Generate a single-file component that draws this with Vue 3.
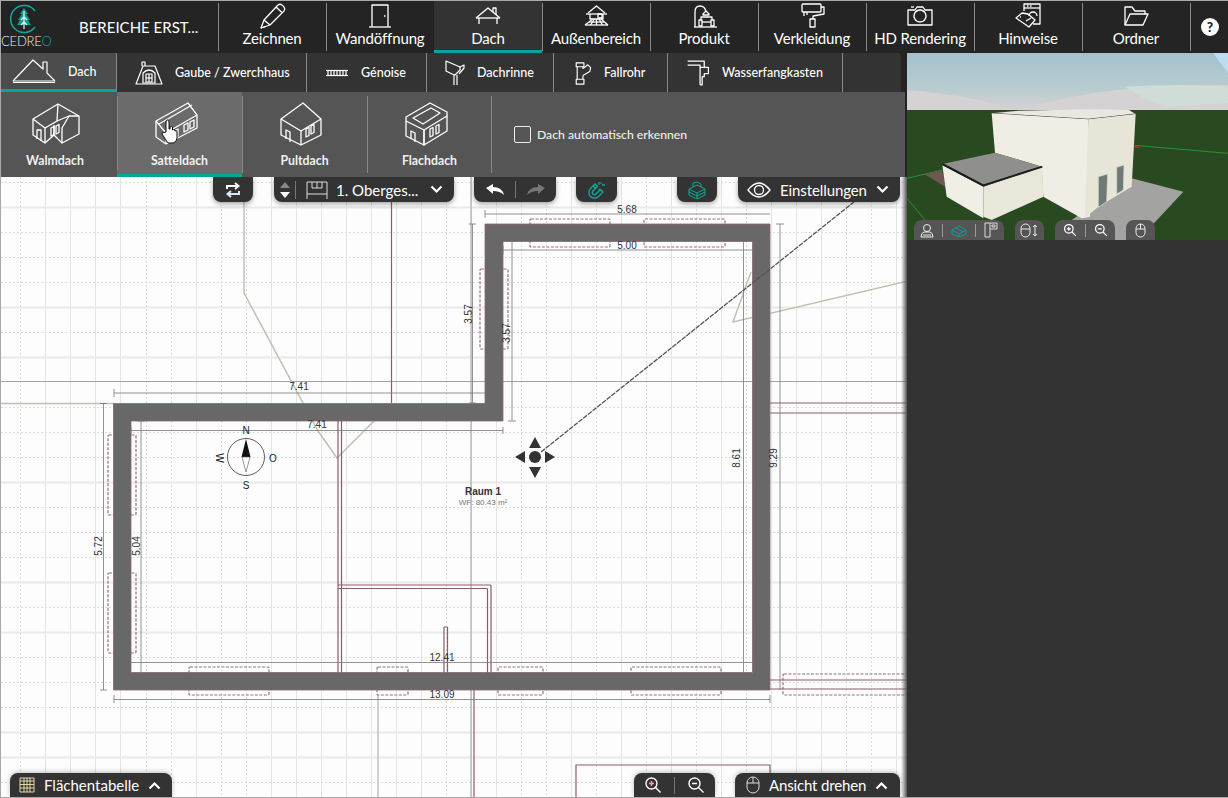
<script setup>
const navItems = [
  { label: 'Zeichnen', icon: ['M4 27l3-8L21 4q2-1.500 4 0l2 2q1.500 2 0 4L13 24z', 'M7 19l6 5', 'M19 6l6 5.500', 'M4 27l5-1.500'] },
  { label: 'Wandöffnung', icon: ['M7 26V4h16v22', 'M4 26h22', 'M19 15h1.500'] },
  { label: 'Dach', active: true, icon: ['M3 17L15 7l12 10', 'M20 11V7h3v7', 'M3 17h24', 'M6 17v6', 'M24 17v6'] },
  { label: 'Außenbereich', icon: ['M7 12l8.500-7 8.500 7', 'M5 13h21', 'M9 13v5h13v-5', 'M17 13h4v4h-4z', 'M4 24l8-6', 'M9.500 24l4-6', 'M15.500 24v-6', 'M21.500 24L18 18', 'M27 24l-7-6', 'M4 24h23', 'M8 21h15'] },
  { label: 'Produkt', icon: ['M6 26V11q0-6 5-6t6 6', 'M14 13l3-3 3 3v1h-6z', 'M12 19v-3h11v3', 'M10 19h3v6h-3z', 'M22 19h3v6h-3z', 'M13 21h9', 'M5 26h23'] },
  { label: 'Verkleidung', icon: ['M6 3h17q1 0 1 1v6q0 1-1 1H6q-1 0-1-1V4q0-1 1-1z', 'M24 6h3v7l-11 2v3', 'M13 18h5v8h-5z', 'M7 11v4', 'M10 11v3'] },
  { label: 'HD Rendering', icon: ['M3 9h7l2-3h6l2 3h7v15H3z', 'M15 9a6 6 0 1 0 .01 0z', 'M6 6h3'] },
  { label: 'Hinweise', icon: ['M11 10V3h16v20h-7', 'M11 7h16', 'M14 5h1.500', 'M17 5h1.500', 'M3 17l6-5 6 1 7 6-6 7z', 'M7 16h1', 'M16 15a4 4 0 0 1 8 0', 'M13 20l5-3'] },
  { label: 'Ordner', icon: ['M4 24V6h7l3 4h10v3', 'M4 24l5-11h18l-5 11z'] }
]

const subTabs = [
  { label: 'Dach', width: 116, iconWidth: 44, iconBox: '0 0 44 24', active: true, icon: ['M1 22h42', 'M1 23.500h42', 'M1 22L21 1l10 9V3h4v11l8 8'] },
  { label: 'Gaube / Zwerchhaus', width: 190, iconWidth: 28, iconBox: '0 0 28 26', icon: ['M1 24L8 6h12l7 18z', 'M7 6V2h3v4', 'M8 23V13q6-6 12 0v10z', 'M11 14h6v8h-6z', 'M14 14v8', 'M11 18h6'] },
  { label: 'Génoise', width: 120, iconWidth: 24, iconBox: '0 0 24 8', icon: ['M1 1.500h22', 'M1 6.500h22', 'M3 1.500v5', 'M6 1.500v5', 'M9 1.500v5', 'M12 1.500v5', 'M15 1.500v5', 'M18 1.500v5', 'M21 1.500v5'] },
  { label: 'Dachrinne', width: 127, iconWidth: 20, iconBox: '0 0 20 26', icon: ['M1 1l14 6v3l-5 5-3-1-6-3z', 'M15 7l4-2v3l-5 6', 'M9 15v10', 'M12 15v10'] },
  { label: 'Fallrohr', width: 114, iconWidth: 20, iconBox: '0 0 20 27', icon: ['M4 3h8v4H4z', 'M5 7v13', 'M11 7v2', 'M11 16v4', 'M4 20h8v5H4z', 'M11 9l5-4 3 3-1 4-7 4'] },
  { label: 'Wasserfangkasten', width: 175, iconWidth: 24, iconBox: '0 0 22 25', icon: ['M1 1h16v6', 'M1 5h12v19', 'M13 7h8v6h-4', 'M17 13v3h-2v8h-2'] }
]

const roofTypes = [
  { label: 'Walmdach', icon: ['M4 18L29 3l21 12v18L33 42l-8-8-9 8L4 34z', 'M29 3l-1 17-12 7', 'M4 18l12 9v15', 'M28 20l12-5 10 0', 'M33 42V27l7-12', 'M25 34V24', 'M8 38V29h4v11', 'M22 27v8l3-1.500v-8z', 'M27 25v8l3-1.500v-8z'] },
  { label: 'Satteldach', active: true, icon: ['M2 20L34 2l9 12v13L12 43 2 36z', 'M2 20l10 12v11', 'M12 32L43 14', 'M5 23L38 4', 'M20 30v7l4-2v-7z', 'M30 24v7l4-2v-7z', 'M36 21v7l4-2v-7z'] },
  { label: 'Pultdach', icon: ['M2 18L24 2l18 16v16L22 44 2 34z', 'M2 18l20 12v14', 'M22 30l20-12', 'M7 38v-9l4 2v10', 'M27 28v8l3-1.500v-8z', 'M32 25v8l3-1.500v-8z'] },
  { label: 'Flachdach', icon: ['M2 16L26 2l17 9v4L20 29 2 20z', 'M2 20v15l18 9V29', 'M20 29v15l23-14V15', 'M9 17L27 7l9 5-17 11z', 'M7 38v-8l4 2v9', 'M26 28v8l3-1.500v-8z', 'M32 25v8l3-1.500v-8z'] }
]

const dottedX = [19, 145, 170, 220, 245, 445, 520, 545, 595, 645, 695, 745, 845, 870]
const solidX = [44, 69, 94, 119, 195, 270, 295, 320, 345, 370, 395, 420, 470, 495, 570, 620, 670, 720, 770, 795, 820, 895]
const dottedY = [182, 232, 257, 282, 332, 407, 432, 457, 507, 532, 557, 607, 657, 682, 707, 782]
const solidY = [207, 307, 357, 482, 582, 632, 732, 757]

const windows = [
  [529, 219, 80, 28], [643, 219, 81, 28],
  [479, 269, 28, 80], [107, 435, 28, 80], [107, 573, 28, 80],
  [188, 667, 80, 28], [376, 667, 31, 28], [497, 667, 45, 28], [630, 667, 90, 28],
  [782, 674, 130, 21]
]

const dimensions = [
  'M113 393H484M113 389v8', 'M130 430.500H502M130 427v7M502 427v7',
  'M484 214H769M484 210v8', 'M502 250H752M502 246v8M752 246v8',
  'M471.500 224V403M468 224h7M468 403h7', 'M511 241.500V421M507 241.500h8M507 421h8',
  'M742.500 241.500V673M739 241.500h7', 'M779 224V690M775 224h8',
  'M102.500 403.500V690M99 403.500h7M99 690h7', 'M140 421V673M136 421h8M136 673h8',
  'M130 662.500H752M752 659v7', 'M113 699.500H769M113 695v8M769 695v8'
]

const dimLabels = [
  { t: '7.41', x: 298, y: 390 }, { t: '7.41', x: 316, y: 428 },
  { t: '5.68', x: 626, y: 213 }, { t: '5.00', x: 626, y: 249 },
  { t: '12.41', x: 441, y: 661 }, { t: '13.09', x: 441, y: 698 }
]

const rotatedLabels = [
  { t: '3.57', x: 471, y: 314 }, { t: '3.57', x: 509, y: 333 },
  { t: '8.61', x: 739, y: 458 }, { t: '9.29', x: 776, y: 458 },
  { t: '5.72', x: 101, y: 546 }, { t: '5.04', x: 139, y: 546 }
]
</script>

<template>
  <div class="app">
    <header class="topbar">
      <div class="logo">
        <svg width="30" height="30" viewBox="0 0 30 30" fill="none">
          <path d="M26 7a13.500 13.500 0 1 0 0 16" stroke="#12a89d" stroke-width="1.600" />
          <path d="M15 4l4 6h-2l4 6h-2l3 5h-7 -7l3-5H9l4-6h-2z" fill="#0f9e92" />
          <path d="M15 7v18M15 13l-3 3M15 13l3 3M15 18l-3 3M15 18l3 3" stroke="#e8f2f0" stroke-width="1.200" />
        </svg>
        <div class="logo-text">CEDRE<span class="logo-o">O</span></div>
      </div>
      <div class="project">BEREICHE ERST...</div>
      <nav class="nav">
        <div v-for="item in navItems" :key="item.label" class="nav-item" :class="{ active: item.active }">
          <svg class="nav-icon" width="30" height="28" viewBox="0 0 30 28" fill="none" stroke="#fff" stroke-width="1.300" stroke-linejoin="round">
            <path v-for="d in item.icon" :key="d" :d="d" />
          </svg>
          <span>{{ item.label }}</span>
        </div>
      </nav>
      <div class="help-cell"><div class="help">?</div></div>
    </header>

    <div class="body">
      <div class="left">
        <div class="subbar">
          <div v-for="tab in subTabs" :key="tab.label" class="sub-tab" :class="{ active: tab.active }" :style="{ width: tab.width + 'px' }">
            <div class="sub-icon">
              <svg :width="tab.iconWidth" height="26" :viewBox="tab.iconBox" fill="none" stroke="#fff" stroke-width="1.200" stroke-linejoin="round">
                <path v-for="d in tab.icon" :key="d" :d="d" />
              </svg>
            </div>
            <span>{{ tab.label }}</span>
          </div>
        </div>

        <div class="roofbar">
          <div v-for="roof in roofTypes" :key="roof.label" class="roof-item" :class="{ active: roof.active }">
            <svg width="52" height="46" viewBox="0 0 52 46" fill="none" stroke="#fff" stroke-width="1.300" stroke-linejoin="round">
              <path v-for="d in roof.icon" :key="d" :d="d" />
            </svg>
            <span>{{ roof.label }}</span>
            <svg v-if="roof.active" class="hand" width="18" height="25" viewBox="0 0 18 25">
              <path d="M5 13V3q0-2 1.500-2T8 3v7l1 0V8q1.500-1 2.500 0v3q1.500-1 2.500 0v1q1.500-.5 2 .5V19q-1 5-5 5H8q-2 0-3-3l-4-6q0-2 2-1.500z" fill="#fff" stroke="#111" stroke-width="1" />
            </svg>
          </div>
          <label class="auto-detect">
            <span class="checkbox"></span>
            Dach automatisch erkennen
          </label>
        </div>

        <div class="canvas">
          <svg class="plan" viewBox="0 177 906 620" fill="none">
            <line v-for="x in dottedX" :key="'dx' + x" :x1="x + 0.5" :x2="x + 0.5" y1="177" y2="798" class="grid-dot" />
            <line v-for="y in dottedY" :key="'dy' + y" x1="0" x2="907" :y1="y + 0.5" :y2="y + 0.5" class="grid-dot" />
            <line v-for="x in solidX" :key="'sx' + x" :x1="x + 0.5" :x2="x + 0.5" y1="177" y2="798" class="grid-solid" />
            <line v-for="y in solidY" :key="'sy' + y" x1="0" x2="907" :y1="y + 0.5" :y2="y + 0.5" class="grid-thick" />

            <path class="guide" d="M0 381.500H907M470 177V798" />
            <path class="roofline" d="M243 177V293L317 431 336 458 373 421M750 272L732 322 907 281M0 403.500H113M377 695V798" />
            <path class="inner" d="M390.500 177V403M337 421V673M340.500 421V673M337 585H490M337 588.500H486.500M486.500 588.500V673M490 585V673M443 627V673M446.500 627V673M443 627h3.500M473 690V798M769 403H907M769 413H907M769 680H907M769 689H907M575 798V765H769V798" />
            <rect v-for="w in windows" :key="w.join()" class="window" :x="w[0]" :y="w[1]" :width="w[2]" :height="w[3]" rx="1" />
            <path class="wall" fill-rule="evenodd" d="M112.500 403.500H484V224H769V690H112.500ZM130 421V672.500H751.500V241.500H502V421Z" />

            <path v-for="d in dimensions" :key="d" class="dim" :d="d" />
            <text v-for="l in dimLabels" :key="l.t + l.x" class="dim-label" :x="l.x" :y="l.y">{{ l.t }}</text>
            <text v-for="l in rotatedLabels" :key="l.t + l.x" class="dim-label" :transform="`translate(${l.x} ${l.y}) rotate(-90)`">{{ l.t }}</text>

            <path class="sight" d="M540 452L853 202" />
            <g fill="#333">
              <circle cx="534" cy="457" r="6" />
              <path d="M534 437l6 11h-12zM534 478l6-11h-12zM514 457l10-6v12zM554 457l-10-6v12z" />
            </g>

            <g class="compass">
              <circle cx="245" cy="457" r="18.500" stroke="#333" stroke-width="0.800" />
              <path d="M245 439l-4.500 18h9z" fill="#111" stroke="none" />
              <path d="M241 457l4 15 4-15z" fill="#fff" stroke="#555" stroke-width="0.600" />
              <text x="245" y="434" class="compass-label">N</text>
              <text x="245" y="489" class="compass-label">S</text>
              <text x="272" y="461.500" class="compass-label">O</text>
              <text class="compass-label" transform="translate(214.500 458) rotate(90)">W</text>
            </g>

            <text x="482" y="495" class="room-name">Raum 1</text>
            <text x="482" y="505" class="room-area">WF: 80.43 m²</text>
          </svg>
          <div class="edge-shadow"></div>

          <div class="tools-top">
            <div class="tool tool-swap">
              <svg width="18" height="18" viewBox="0 0 18 18" fill="none" stroke="#fff" stroke-width="2">
                <path d="M3 8V5h11M11 2l3.500 3L11 8" />
                <path d="M15 10v3H4M7 10l-3.500 3L7 16" stroke="#d5e8f5" />
              </svg>
            </div>
            <div class="tool tool-floor">
              <svg width="10" height="18" viewBox="0 0 10 18">
                <path d="M5 1l5 6H0z" fill="#888" />
                <path d="M5 17l5-6H0z" fill="#fff" />
              </svg>
              <span class="tool-sep"></span>
              <svg class="plan-icon" width="22" height="20" viewBox="0 0 22 20" fill="none" stroke="#ddd" stroke-width="1">
                <path d="M1 2h20v12H1zM1 14v5M21 14v5" />
                <path d="M6 2v6h10V2M11 2v6" />
              </svg>
              <span class="floor-name">1. Oberges...</span>
              <svg class="chevron" width="13" height="9" viewBox="0 0 13 9" fill="none" stroke="#fff" stroke-width="2.200"><path d="M1.500 1.500l5 5 5-5" /></svg>
            </div>
            <div class="tool tool-undo">
              <svg width="18" height="12" viewBox="0 0 18 12" fill="#fff"><path d="M0 4l7-4v3q9 0 11 8-4-4-11-4v3z" /></svg>
              <span class="tool-sep tall"></span>
              <svg width="18" height="12" viewBox="0 0 18 12" fill="#777"><path d="M18 4l-7-4v3q-9 0-11 8 4-4 11-4v3z" /></svg>
            </div>
            <div class="tool tool-magnet">
              <svg width="18" height="18" viewBox="0 0 18 18" fill="none" stroke="#12a89d" stroke-width="1.300">
                <path d="M7 3L2.500 7.500a5.500 5.500 0 0 0 8 8L15 11l-2.500-2.500-4.500 4.500a2 2 0 0 1-3-3l4.500-4.500zM5 5l2.500 2.500M13 9l-2.500-1M11 1v3M14 4h3M13.500 1.500l-1 1" />
              </svg>
            </div>
            <div class="tool tool-cube">
              <svg width="18" height="18" viewBox="0 0 18 18" fill="none" stroke="#12a89d" stroke-width="1">
                <path d="M1 8l8-4 8 4v6l-8 4-8-4zM1 8l8 4 8-4M9 12v6M1 11l8 4 8-4M5 6V2l4-1 4 2v3" />
              </svg>
            </div>
            <div class="tool tool-settings">
              <svg width="24" height="16" viewBox="0 0 24 16" fill="none" stroke="#fff" stroke-width="1.300">
                <path d="M1 8q11-14 22 0-11 14-22 0z" /><circle cx="12" cy="8" r="4.500" />
              </svg>
              <span class="settings-label">Einstellungen</span>
              <svg width="13" height="9" viewBox="0 0 13 9" fill="none" stroke="#fff" stroke-width="2.200"><path d="M1.500 1.500l5 5 5-5" /></svg>
            </div>
          </div>

          <div class="tools-bottom">
            <div class="tool-up table-btn">
              <svg width="16" height="16" viewBox="0 0 16 16" fill="none" stroke="#e6d9a8" stroke-width="1">
                <path d="M1 1h14v14H1zM1 4h14M5 1v14M8 1v14M11 1v14M1 7.500h14M1 11h14" />
              </svg>
              <span>Flächentabelle</span>
              <svg width="13" height="9" viewBox="0 0 13 9" fill="none" stroke="#fff" stroke-width="2.200"><path d="M1.500 7.500l5-5 5 5" /></svg>
            </div>
            <div class="bottom-right">
              <div class="tool-up zoom-btn">
                <svg width="18" height="18" viewBox="0 0 18 18" fill="none" stroke="#fff" stroke-width="1.400">
                  <circle cx="7.500" cy="7.500" r="5.500" /><path d="M11.500 11.500l5 5" />
                  <path d="M5 7.500h5M7.500 5v5" stroke="#f1a0a0" />
                </svg>
                <span class="tool-sep tall"></span>
                <svg width="18" height="18" viewBox="0 0 18 18" fill="none" stroke="#fff" stroke-width="1.400">
                  <circle cx="7.500" cy="7.500" r="5.500" /><path d="M11.500 11.500l5 5M5 7.500h5" />
                </svg>
              </div>
              <div class="tool-up rotate-btn">
                <svg width="14" height="18" viewBox="0 0 14 18" fill="none" stroke="#ddd" stroke-width="1">
                  <rect x="1" y="1" width="12" height="16" rx="6" /><path d="M1 7h12M7 1v6" />
                </svg>
                <span class="tight">Ansicht drehen</span>
                <svg width="13" height="9" viewBox="0 0 13 9" fill="none" stroke="#fff" stroke-width="2.200"><path d="M1.500 7.500l5-5 5 5" /></svg>
              </div>
            </div>
          </div>
        </div>
      </div>

      <aside class="right">
        <div class="scene">
          <svg class="scene-svg" viewBox="6 9 963 561" preserveAspectRatio="none">
            <defs>
              <linearGradient id="sky" x1="0" y1="0" x2="0" y2="1">
                <stop offset="0" stop-color="#a4c1cd" />
                <stop offset="0.6" stop-color="#b7cccf" />
                <stop offset="1" stop-color="#d8d2d3" />
              </linearGradient>
            </defs>
            <rect x="6" y="9" width="963" height="175" fill="url(#sky)" />
            <path d="M6 120q150 10 300 50l-300 12zM400 165q200-60 570-60v75H400z" fill="#d5d2d3" />
            <path d="M660 110q60 40 120 60l190-10v-50q-150-10-310 0z" fill="#cfdcd8" />
            <path d="M925 9h44v60q-30-40-44-60z" fill="#bcdcef" />
            <rect x="6" y="180" width="963" height="390" fill="#294a20" />
            <path d="M6 385L112 360M6 445L60 510M690 286L969 310" stroke="#2f8f35" stroke-width="3" fill="none" />
            <path d="M686 288h18v6h-18z" fill="#a52a2a" />
            <path d="M58 372L112 362 122 412z" fill="#6e5853" />
            <path d="M680 385L835 425 700 570H560L500 510z" fill="#a3a3a1" />

            <path d="M260 190L340 182 560 178 672 180 692 192 550 208z" fill="#e9e7e0" />
            <path d="M260 190L550 208 692 192" stroke="#3a3a38" stroke-width="3" fill="none" />
            <path d="M260 190L550 208 555 500 530 505 415 440 410 350 270 308z" fill="#f0ede5" />
            <path d="M550 208L692 192 680 410 580 470 540 505z" fill="#e7e4d8" />
            <path d="M112 345L235 410 235 505 125 440z" fill="#f0eee5" />
            <path d="M235 410L412 350 415 440 260 510 235 500z" fill="#e9e6da" />
            <path d="M112 342L270 308 412 350 235 410z" fill="#8f8f8d" />
            <path d="M112 342L235 406 412 350" stroke="#1c1c1c" stroke-width="6" fill="none" />
            <path d="M580 380L608 372 605 455 580 472z" fill="#707a75" stroke="#ddd" stroke-width="2" />
            <path d="M635 352L657 345 655 420 635 432z" fill="#707a75" stroke="#ddd" stroke-width="2" />
          </svg>

          <div class="mini-tools">
            <div class="mini mini-views">
              <svg width="14" height="15" viewBox="0 0 14 15" fill="none" stroke="#eee"><circle cx="7" cy="5" r="3.500" /><path d="M1 14q0-4 3-5h6q3 1 3 5zM3 12h8" /></svg>
              <span class="mini-sep"></span>
              <svg width="16" height="15" viewBox="0 0 16 15" fill="none" stroke="#149c94"><path d="M1 7l7-4 7 4v4l-7 3-7-3zM1 7l7 4 7-4M8 11v3M5 5l7 4" /></svg>
              <span class="mini-sep"></span>
              <svg width="14" height="16" viewBox="0 0 14 16" fill="none" stroke="#ddd"><path d="M1 1h12v6H6v8H1zM6 7V1M8 3h3v2H8z" /></svg>
            </div>
            <div class="mini mini-orbit">
              <svg width="20" height="15" viewBox="0 0 20 15" fill="none" stroke="#eee"><rect x="1" y="1" width="9" height="13" rx="4.500" /><path d="M1 6h9M15 2v11M13 4l2-2 2 2M13 11l2 2 2-2" /></svg>
            </div>
            <div class="mini mini-zoom">
              <svg width="14" height="14" viewBox="0 0 18 18" fill="none" stroke="#fff" stroke-width="1.600"><circle cx="7.500" cy="7.500" r="5.500" /><path d="M11.500 11.500l5 5M5 7.500h5M7.500 5v5" /></svg>
              <span class="mini-sep"></span>
              <svg width="14" height="14" viewBox="0 0 18 18" fill="none" stroke="#fff" stroke-width="1.600"><circle cx="7.500" cy="7.500" r="5.500" /><path d="M11.500 11.500l5 5M5 7.500h5" /></svg>
            </div>
            <div class="mini mini-mouse">
              <svg width="11" height="15" viewBox="0 0 11 15" fill="none" stroke="#eee"><rect x="1" y="1" width="9" height="13" rx="4.500" /><path d="M1 6h9M5.500 1v5" /></svg>
            </div>
          </div>
        </div>
      </aside>
    </div>
  </div>
</template>

<style scoped>
.app {
  width: 1228px;
  height: 798px;
  box-sizing: border-box;
  border-top: 1px solid #a8a8a8;
  border-left: 1px solid #a8a8a8;
  border-bottom: 1px solid #a8a8a8;
  display: flex;
  flex-direction: column;
  overflow: hidden;
  font-family: Lato, "Open Sans", sans-serif;
  color: #fff;
  background: #333;
}

.topbar {
  height: 52px;
  flex: none;
  display: flex;
  background: #242424;
}

.logo {
  width: 78px;
  flex: none;
  display: flex;
  flex-direction: column;
  padding-top: 3px;
  box-sizing: border-box;
}

.logo svg { margin-left: 8px; }

.logo-text {
  margin-top: 1px;
  font-size: 13px;
  font-weight: 300;
  line-height: 13px;
  letter-spacing: -0.2px;
  color: #eee;
}

.logo-o { color: #12a89d; }

.project {
  width: 139px;
  flex: none;
  font-size: 15px;
  line-height: 52px;
  padding-bottom: 4px;
  box-sizing: border-box;
  white-space: nowrap;
}

.nav { display: flex; }

.nav-item {
  width: 108px;
  height: 52px;
  box-sizing: border-box;
  display: flex;
  flex-direction: column;
  align-items: center;
  font-size: 15px;
  letter-spacing: -0.15px;
  line-height: 19px;
  position: relative;
  white-space: nowrap;
}

.nav-item::before {
  content: "";
  position: absolute;
  left: 0;
  top: 2px;
  bottom: 2px;
  width: 1px;
  background: #8a8a8a;
}

.nav-icon { flex: none; }

.nav-item.active {
  background: #333;
  border-bottom: 3px solid #00a79d;
}

.nav-item.active::before { display: none; }

.help-cell {
  flex: 1;
  position: relative;
  padding: 17px 0 0 11px;
}

.help-cell::before {
  content: "";
  position: absolute;
  left: 0;
  top: 2px;
  bottom: 2px;
  width: 1px;
  background: #8a8a8a;
}

.help {
  width: 18px;
  height: 18px;
  border-radius: 50%;
  background: #fff;
  color: #242424;
  font-size: 14px;
  font-weight: 900;
  line-height: 18px;
  text-align: center;
}

.body {
  flex: 1;
  min-height: 0;
  display: flex;
}

.left {
  width: 906px;
  flex: none;
  display: flex;
  flex-direction: column;
  background: #242424;
}

.subbar {
  width: 900px;
  height: 39px;
  flex: none;
  display: flex;
  background: #333;
  border-top-right-radius: 4px;
}

.sub-tab {
  height: 39px;
  box-sizing: border-box;
  display: flex;
  align-items: center;
  font-size: 12.500px;
  font-weight: 500;
  border-right: 1px solid #8a8a8a;
  background-clip: padding-box;
  white-space: nowrap;
  padding-left: 18px;
  gap: 12px;
}

.sub-tab.active {
  background: #4c4c4c;
  border-bottom: 3px solid #00a79d;
  padding-left: 11px;
}

.sub-icon { display: flex; flex: none; }

.roofbar {
  width: 904px;
  height: 85px;
  flex: none;
  display: flex;
  align-items: stretch;
  background: #555;
}

.roof-item {
  width: 125px;
  position: relative;
  box-sizing: border-box;
  display: flex;
  flex-direction: column;
  align-items: center;
  font-size: 12.300px;
  font-weight: 700;
  color: #f0f0f0;
  padding-top: 9px;
}

.roof-item:first-child { width: 116px; padding-right: 8px; }

.roof-item + .roof-item::before,
.roof-item:last-of-type::after {
  content: "";
  position: absolute;
  top: 4px;
  bottom: 4px;
  width: 1px;
  background: #8a8a8a;
}

.roof-item + .roof-item::before { left: 0; }
.roof-item:last-of-type::after { right: 0; }

.roof-item span { margin-top: 6px; }

.roof-item.active {
  background: #6b6b6b;
  border-bottom: 3px solid #00a79d;
}

.hand {
  position: absolute;
  left: 44px;
  top: 27px;
}

.auto-detect {
  display: flex;
  align-items: center;
  margin-left: 22px;
  gap: 6px;
  font-size: 12.200px;
  font-weight: 500;
  color: #f0f0f0;
}

.checkbox {
  width: 15px;
  height: 15px;
  border: 1px solid #eee;
  border-radius: 2px;
}

.canvas {
  flex: 1;
  min-height: 0;
  position: relative;
  overflow: hidden;
  background: #fdfdfd;
}

.plan {
  display: block;
  width: 100%;
  height: 100%;
}

.grid-dot { stroke: #dcdcdc; stroke-width: 1; stroke-dasharray: 2 2; }
.grid-solid { stroke: #e4e4e4; stroke-width: 1; }
.grid-thick { stroke: #e9e9e9; stroke-width: 2; }

.guide { stroke: #8a8a8a; stroke-width: 0.800; }
.roofline { stroke: #b9c5b2; stroke-width: 1.500; }
.inner { stroke: #8a5e6c; stroke-width: 1.200; }
.window { stroke: #9c6f80; stroke-width: 1.200; stroke-dasharray: 3 1.500; }
.wall { fill: #686868; stroke: #8d6472; stroke-width: 0.800; }
.dim { stroke: #777; stroke-width: 0.800; }
.dim-label {
  font-family: "Liberation Sans", Arial, sans-serif;
  font-size: 10px;
  fill: #333;
  text-anchor: middle;
}
.sight { stroke: #555; stroke-width: 1.300; stroke-dasharray: 5 1; }
.compass-label {
  font-family: "Liberation Sans", Arial, sans-serif;
  font-size: 10px;
  fill: #222;
  text-anchor: middle;
}
.room-name {
  font-family: "Liberation Sans", Arial, sans-serif;
  font-size: 10px;
  font-weight: 700;
  fill: #333;
  text-anchor: middle;
}
.room-area {
  font-family: "Liberation Sans", Arial, sans-serif;
  font-size: 8px;
  fill: #777;
  text-anchor: middle;
}

.edge-shadow {
  position: absolute;
  top: 0;
  right: 0;
  bottom: 0;
  width: 6px;
  background: linear-gradient(to right, rgba(70, 70, 70, 0), #555);
}

.tools-top {
  position: absolute;
  top: 0;
  left: 212px;
  display: flex;
  gap: 20px;
}

.tool {
  height: 25px;
  box-sizing: border-box;
  display: flex;
  align-items: center;
  justify-content: center;
  background: #333;
  border-radius: 0 0 8px 8px;
  box-shadow: 0 2px 5px rgba(0, 0, 0, 0.35);
}

.tool-swap { width: 40px; margin-right: 1px; }
.tool-magnet { width: 41px; }
.tool-cube { width: 40px; margin-left: 40px; margin-right: 1px; }

.tool-floor {
  width: 180px;
  justify-content: flex-start;
  padding-left: 6px;
}

.tool-undo { width: 82px; gap: 11px; }

.tool-sep {
  width: 1px;
  height: 18px;
  background: #777;
  margin-left: 5px;
}

.tool-sep.tall { margin: 0; height: 17px; }

.plan-icon { margin-left: 10px; }

.floor-name {
  margin-left: 8px;
  width: 94px;
  font-size: 15px;
  white-space: nowrap;
}

.tool-settings {
  width: 162px;
  justify-content: flex-start;
  padding-left: 9px;
}

.settings-label {
  margin-left: 9px;
  margin-right: 9px;
  font-size: 15px;
  letter-spacing: -0.1px;
  white-space: nowrap;
}

.tools-bottom {
  position: absolute;
  left: 9px;
  right: 7px;
  bottom: 0;
  display: flex;
  justify-content: space-between;
}

.bottom-right { display: flex; gap: 20px; }

.tool-up {
  height: 24px;
  box-sizing: border-box;
  display: flex;
  align-items: center;
  background: #333;
  border-radius: 8px 8px 0 0;
  font-size: 15px;
  white-space: nowrap;
  box-shadow: 0 -1px 5px rgba(0, 0, 0, 0.25);
}

.tight { letter-spacing: -0.15px; }

.table-btn { width: 162px; padding-left: 9px; gap: 9px; }
.zoom-btn { width: 81px; justify-content: center; gap: 12px; }
.rotate-btn { width: 165px; padding-left: 11px; gap: 9px; }

.right {
  flex: 1;
  min-width: 0;
  background: #333;
}

.scene {
  height: 187px;
  position: relative;
}

.scene-svg {
  display: block;
  width: 100%;
  height: 100%;
  filter: blur(0.4px);
}

.mini-tools {
  position: absolute;
  left: 7px;
  bottom: 0;
  display: flex;
  gap: 11px;
}

.mini {
  height: 20px;
  display: flex;
  align-items: center;
  justify-content: center;
  background: #555;
  border-radius: 8px 8px 0 0;
}

.mini-views { width: 90px; gap: 8px; }
.mini-orbit { width: 29px; }
.mini-zoom { width: 60px; gap: 8px; }
.mini-mouse { width: 29px; }

.mini-sep {
  width: 1px;
  height: 13px;
  background: #999;
}
</style>

<style>
html, body { margin: 0; padding: 0; background: #333; }
</style>
